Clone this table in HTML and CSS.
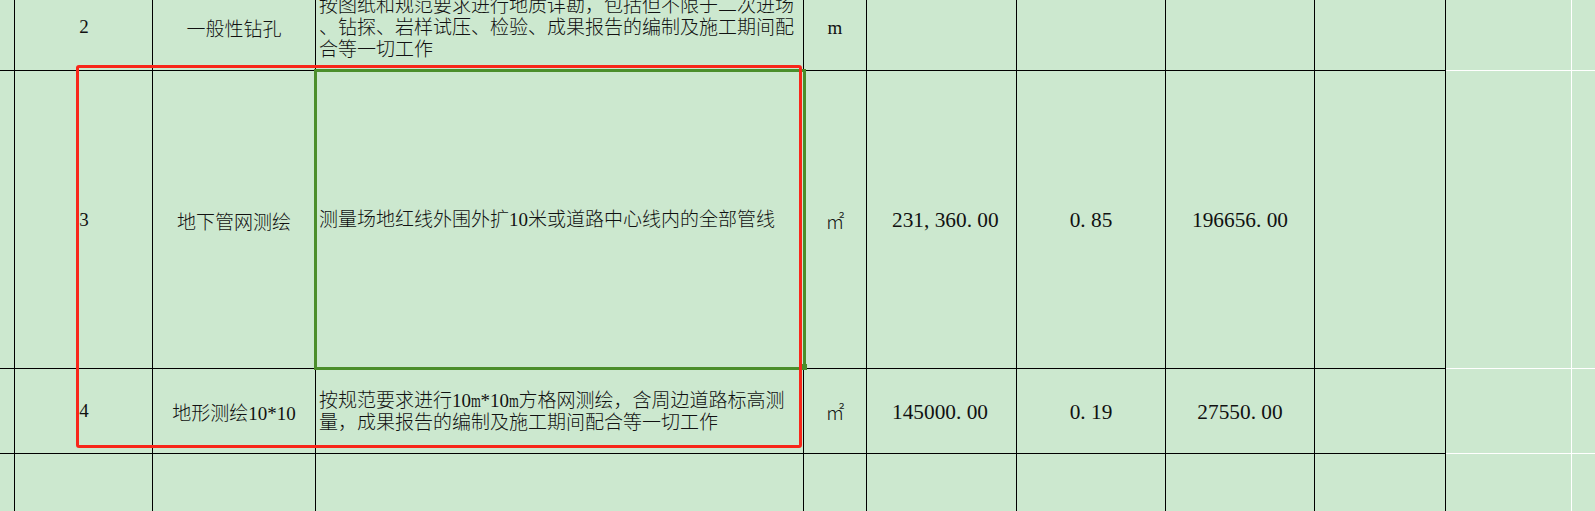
FILE: index.html
```html
<!DOCTYPE html>
<html lang="zh-CN">
<head>
<meta charset="utf-8">
<title>工程量清单</title>
<link rel="stylesheet" href="styles.css">
</head>
<body>
<div class="sheet">
  <div class="grid">
    <!-- row 2 -->
    <div class="c"></div>
    <div class="c idx">2</div>
    <div class="c name">一般性钻孔</div>
    <div class="c desc">
      <div class="ln">按图纸和规范要求进行地质详勘，包括但不限于二次进场</div>
      <div class="ln">、钻探、岩样试压、检验、成果报告的编制及施工期间配</div>
      <div class="ln">合等一切工作</div>
    </div>
    <div class="c unit">m</div>
    <div class="c qty"></div>
    <div class="c num"></div>
    <div class="c num"></div>
    <div class="c"></div>
    <div class="c x"></div>
    <div class="c z"></div>

    <!-- row 3 -->
    <div class="c"></div>
    <div class="c idx">3</div>
    <div class="c name">地下管网测绘</div>
    <div class="c desc">
      <div class="ln">测量场地红线外围外扩10米或道路中心线内的全部管线</div>
    </div>
    <div class="c unit">㎡</div>
    <div class="c qty">231<span class="pt">,</span>360<span class="pt">.</span>00</div>
    <div class="c num">0<span class="pt">.</span>85</div>
    <div class="c num">196656<span class="pt">.</span>00</div>
    <div class="c"></div>
    <div class="c x"></div>
    <div class="c z"></div>

    <!-- row 4 -->
    <div class="c"></div>
    <div class="c idx">4</div>
    <div class="c name">地形测绘10*10</div>
    <div class="c desc">
      <div class="ln">按规范要求进行10<span class="hw">m</span>*10<span class="hw">m</span>方格网测绘，含周边道路标高测</div>
      <div class="ln">量，成果报告的编制及施工期间配合等一切工作</div>
    </div>
    <div class="c unit">㎡</div>
    <div class="c qty">145000<span class="pt">.</span>00</div>
    <div class="c num">0<span class="pt">.</span>19</div>
    <div class="c num">27550<span class="pt">.</span>00</div>
    <div class="c"></div>
    <div class="c x"></div>
    <div class="c z"></div>

    <!-- row 5 -->
    <div class="c"></div>
    <div class="c"></div>
    <div class="c"></div>
    <div class="c"></div>
    <div class="c"></div>
    <div class="c"></div>
    <div class="c"></div>
    <div class="c"></div>
    <div class="c"></div>
    <div class="c x"></div>
    <div class="c z"></div>
  </div>

  <div class="selection"></div>
  <div class="handle"></div>
  <div class="mark"></div>
</div>
</body>
</html>
```

FILE: styles.css
```css
html, body {
  margin: 0;
  padding: 0;
}

body {
  background: #cce8cf;
  width: 1595px;
  height: 511px;
  overflow: hidden;
  color: #111;
  font-family: "Liberation Serif", "Noto Sans CJK SC", serif;
  font-size: 19px;
}

.sheet {
  position: relative;
  width: 1595px;
  height: 511px;
  overflow: hidden;
}

.grid {
  display: grid;
  grid-template-columns: 15px 138px 163px 488px 63px 150px 149px 149px 131px 126px 1fr;
  grid-template-rows: 87px 298px 85px 120px;
  margin-top: -16px;
}

.c {
  box-sizing: border-box;
  border-right: 1px solid #000;
  border-bottom: 1px solid #000;
  display: flex;
  align-items: center;
  justify-content: center;
  white-space: nowrap;
  font-weight: 300;
}

.c.x {
  border-right: 1px solid #fff;
  border-bottom: 1px solid #fff;
}

.c.z {
  border-right: none;
  border-bottom: 1px solid #fff;
}

.idx {
  padding-left: 1px;
}

.name {
  padding-top: 1px;
}

.desc {
  flex-direction: column;
  align-items: flex-start;
  justify-content: center;
  padding-left: 3px;
  line-height: 22px;
  padding-top: 1px;
}

.hw {
  display: inline-block;
  width: 0.5em;
  transform: scaleX(0.66);
  transform-origin: left center;
}

.unit {
  padding-top: 1px;
}

.qty,
.num {
  font-size: 21.33px;
  font-family: "Liberation Serif", serif;
  font-weight: 400;
  padding-top: 2px;
}

.qty {
  justify-content: flex-start;
  padding-left: 25px;
}

.pt {
  display: inline-block;
  width: 0.5em;
  text-align: left;
}

.selection {
  position: absolute;
  left: 314px;
  top: 69px;
  width: 492px;
  height: 301px;
  box-sizing: border-box;
  border: 3px solid #4b8e2b;
}

.handle {
  position: absolute;
  left: 801px;
  top: 364px;
  width: 6px;
  height: 6px;
  background: #4b8e2b;
}

.mark {
  position: absolute;
  left: 76px;
  top: 65px;
  width: 726px;
  height: 383px;
  box-sizing: border-box;
  border: 3px solid #f8261a;
  border-radius: 3px;
}
```
